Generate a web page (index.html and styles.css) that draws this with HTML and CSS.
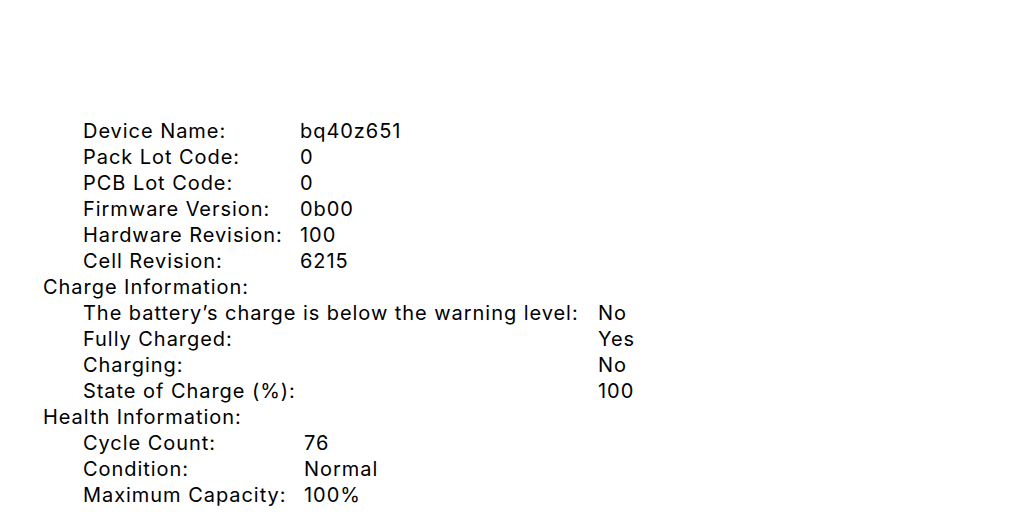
FILE: index.html
```html
<!DOCTYPE html>
<html lang="en">
<head>
<meta charset="utf-8">
<title>Battery Information</title>
<link rel="stylesheet" href="styles.css">
</head>
<body>
<main class="report">
  <dl class="group group-model">
    <dt>Device Name:</dt><dd>bq40z651</dd>
    <dt>Pack Lot Code:</dt><dd>0</dd>
    <dt>PCB Lot Code:</dt><dd>0</dd>
    <dt>Firmware Version:</dt><dd>0b00</dd>
    <dt>Hardware Revision:</dt><dd>100</dd>
    <dt>Cell Revision:</dt><dd>6215</dd>
  </dl>
  <section class="section">
    <h2 class="section-title">Charge Information:</h2>
    <dl class="group group-charge">
      <dt>The battery’s charge is below the warning level:</dt><dd>No</dd>
      <dt>Fully Charged:</dt><dd>Yes</dd>
      <dt>Charging:</dt><dd>No</dd>
      <dt>State of Charge (%):</dt><dd>100</dd>
    </dl>
  </section>
  <section class="section">
    <h2 class="section-title">Health Information:</h2>
    <dl class="group group-health">
      <dt>Cycle Count:</dt><dd>76</dd>
      <dt>Condition:</dt><dd>Normal</dd>
      <dt>Maximum Capacity:</dt><dd>100%</dd>
    </dl>
  </section>
</main>
</body>
</html>
```

FILE: styles.css
```css
html, body {
  margin: 0;
  padding: 0;
  background: #ffffff;
}

body {
  font-family: Inter, "Noto Sans", "Liberation Sans", sans-serif;
  font-size: 20px;
  line-height: 26px;
  letter-spacing: 0.95px;
  color: #000000;
}

.report {
  padding: 118px 0 0 43px;
}

.section-title {
  margin: 0;
  font-size: 20px;
  font-weight: 400;
  line-height: 26px;
}

.group {
  display: grid;
  margin: 0;
  padding-left: 40px;
}

.group dt,
.group dd {
  margin: 0;
  white-space: nowrap;
}

.group-model {
  grid-template-columns: 217px auto;
}

.group-charge {
  grid-template-columns: 515px auto;
}

.group-health {
  grid-template-columns: 221px auto;
}
```
